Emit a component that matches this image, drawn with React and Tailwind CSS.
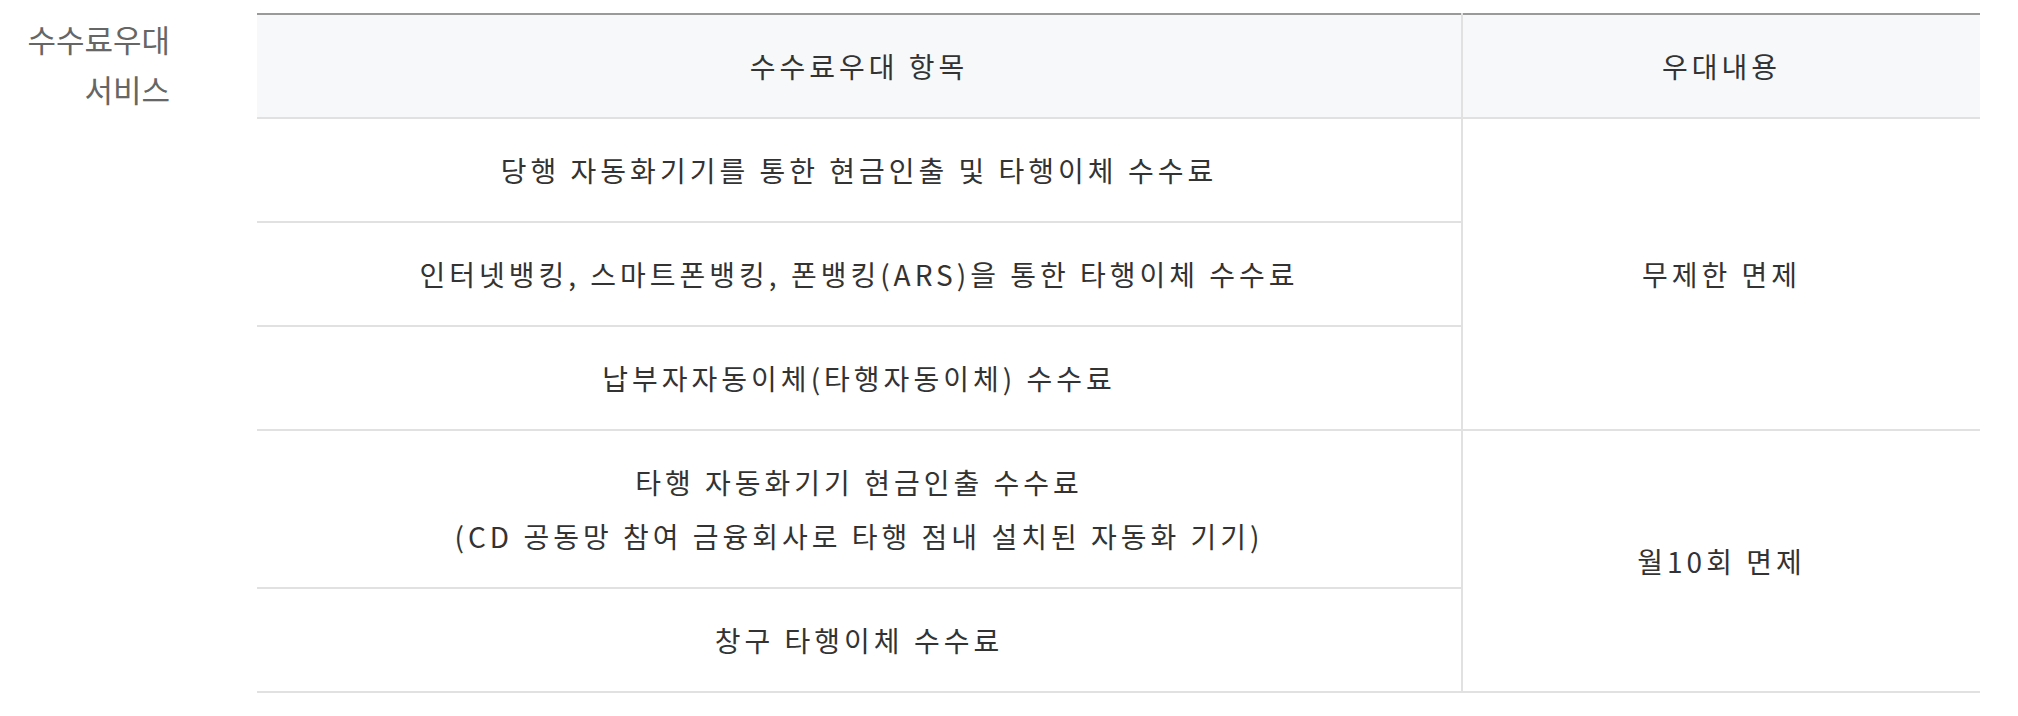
const rows = [
  { item: ["당행 자동화기기를 통한 현금인출 및 타행이체 수수료"], benefit: "무제한 면제", span: 3 },
  { item: ["인터넷뱅킹, 스마트폰뱅킹, 폰뱅킹(ARS)을 통한 타행이체 수수료"] },
  { item: ["납부자자동이체(타행자동이체) 수수료"] },
  {
    item: ["타행 자동화기기 현금인출 수수료", "(CD 공동망 참여 금융회사로 타행 점내 설치된 자동화 기기)"],
    benefit: "월10회 면제",
    span: 2,
  },
  { item: ["창구 타행이체 수수료"] },
];

const App = () => {
  return (
    <div
      className="flex w-[2018px] h-[716px] bg-white pt-[13px]"
      style={{ fontFamily: '"Noto Sans CJK KR", "Noto Sans", sans-serif' }}
    >
      {/* Label */}
      <div className="w-[170px] shrink-0 text-right text-[31px] leading-[50px] text-[#666] pt-[1px]">
        <p>수수료우대</p>
        <p>서비스</p>
      </div>

      {/* Table */}
      <div className="ml-[87px] w-[1723px]">
        <table className="w-full table-fixed border-collapse border-t-2 border-[#9a9a9a] text-[#333] text-[28px] leading-[54px] tracking-[4px]">
          <colgroup>
            <col className="w-[1205px]" />
            <col className="w-[518px]" />
          </colgroup>
          <thead>
            <tr className="bg-[#f7f8fa]">
              <th className="font-normal py-6 border-b-2 border-[#e1e1e1]">수수료우대 항목</th>
              <th className="font-normal py-6 border-b-2 border-l-2 border-[#e1e1e1]">우대내용</th>
            </tr>
          </thead>
          <tbody>
            {rows.map((row, i) => (
              <tr key={i}>
                <td className="text-center py-6 border-b-2 border-[#e1e1e1]">
                  {row.item.map((line, j) => (
                    <p key={j}>{line}</p>
                  ))}
                </td>
                {row.benefit && (
                  <td
                    rowSpan={row.span}
                    className="text-center align-middle border-b-2 border-l-2 border-[#e1e1e1]"
                  >
                    {row.benefit}
                  </td>
                )}
              </tr>
            ))}
          </tbody>
        </table>
      </div>
    </div>
  );
};

export default App;
